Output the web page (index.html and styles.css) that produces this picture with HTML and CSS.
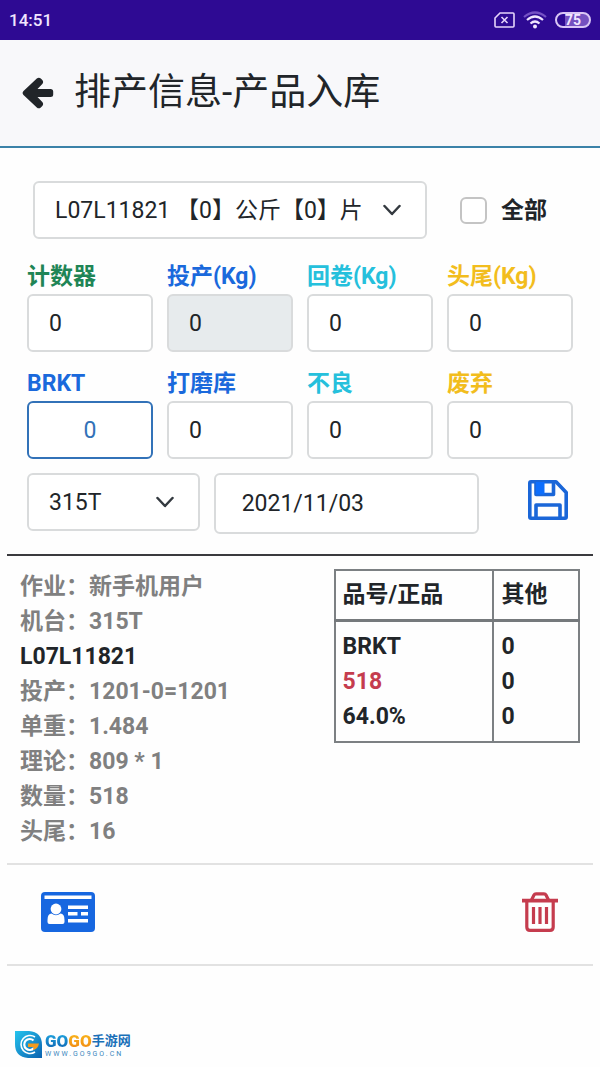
FILE: index.html
```html
<!DOCTYPE html>
<html lang="zh-CN">
<head>
  <meta charset="UTF-8" />
  <meta name="viewport" content="width=device-width, initial-scale=1" />
  <title>排产信息-产品入库</title>
  <link rel="stylesheet" href="styles.css">
</head>
<body>
  <div class="status-bar">
    <span>14:51</span>
    <div class="status-icons">
      <svg width="21" height="16" viewBox="0 0 21 16" fill="none" stroke="#e6d5fb" stroke-width="1.6">
        <path d="M6 1H19Q20 1 20 2V14Q20 15 19 15H2Q1 15 1 14V6Z" />
        <path d="M7.500 5L13.500 11M13.500 5L7.500 11" />
      </svg>
      <svg width="24" height="18" viewBox="0 0 24 18" fill="none" stroke="#f1e6ff" stroke-width="2.200">
        <path d="M1 6Q12 -3 23 6" stroke="#7551c4" />
        <path d="M4 9Q12 2 20 9" />
        <path d="M7.500 12.500Q12 8.500 16.500 12.500" />
        <circle cx="12" cy="15.500" r="2" fill="#f1e6ff" stroke="none" />
      </svg>
      <span class="battery">75</span>
    </div>
  </div>

  <header>
    <button type="button" class="back" aria-label="返回">
      <svg width="32" height="32" viewBox="0 0 32 32" fill="#212529">
        <path d="M18.800 1.500L20.300 3Q22 5 20.300 7L15.500 12H28.500Q31.200 12 31.200 14.500V17.500Q31.200 20 28.500 20H15.500L20.300 25Q22 27 20.300 29L18.800 30.500Q16.800 32.200 14.800 30.500L1.500 18Q-0.300 16 1.500 14L14.800 1.500Q16.800 -0.200 18.800 1.500Z" />
      </svg>
    </button>
    <h1>排产信息-产品入库</h1>
  </header>

  <main>
    <form>
      <div class="batch-row">
        <select class="control" aria-label="批次">
          <option>L07L11821 【0】公斤【0】片</option>
        </select>
        <label class="check"><input type="checkbox" name="all" />全部</label>
      </div>

      <div class="fields">
        <div class="field">
          <label for="counter" class="green">计数器</label>
          <input class="control" type="text" id="counter" value="0" />
        </div>
        <div class="field">
          <label for="input-kg" class="blue">投产(Kg)</label>
          <input class="control" type="text" id="input-kg" value="0" readonly />
        </div>
        <div class="field">
          <label for="rewind" class="cyan">回卷(Kg)</label>
          <input class="control" type="text" id="rewind" value="0" />
        </div>
        <div class="field">
          <label for="ends" class="yellow">头尾(Kg)</label>
          <input class="control" type="text" id="ends" value="0" />
        </div>
        <div class="field">
          <label for="brkt" class="blue">BRKT</label>
          <button class="control outline" type="button" id="brkt">0</button>
        </div>
        <div class="field">
          <label for="polish" class="blue">打磨库</label>
          <input class="control" type="text" id="polish" value="0" />
        </div>
        <div class="field">
          <label for="defect" class="cyan">不良</label>
          <input class="control" type="text" id="defect" value="0" />
        </div>
        <div class="field">
          <label for="scrap" class="yellow">废弃</label>
          <input class="control" type="text" id="scrap" value="0" />
        </div>
      </div>

      <div class="machine-row">
        <select class="control" aria-label="机台">
          <option>315T</option>
        </select>
        <input class="control date" type="text" value="2021/11/03" aria-label="日期" />
        <button type="submit" class="save" aria-label="保存">
          <svg width="40" height="40" viewBox="0 0 40 40" fill="none" stroke="#1a66d8" stroke-width="3.600" stroke-linejoin="round">
            <path d="M3 1.800H28L38.200 12.500V37Q38.200 38.200 37 38.200H3Q1.800 38.200 1.800 37V3Q1.800 1.800 3 1.800Z" />
            <path d="M8 2V14.500H25.500V2" />
            <path d="M8 2H16.500V14.500H8Z" fill="#0d6efd" stroke="none" />
            <path d="M8 38V25H32V38" />
          </svg>
        </button>
      </div>
    </form>

    <section class="record">
      <div class="info">
        <div>作业：新手机用户</div>
        <div>机台：315T</div>
        <div class="batch">L07L11821</div>
        <div>投产：1201-0=1201</div>
        <div>单重：1.484</div>
        <div>理论：809 * 1</div>
        <div>数量：518</div>
        <div>头尾：16</div>
      </div>
      <table>
        <thead>
          <tr><th>品号/正品</th><th>其他</th></tr>
        </thead>
        <tbody>
          <tr><td>BRKT</td><td>0</td></tr>
          <tr><td class="red">518</td><td>0</td></tr>
          <tr><td>64.0%</td><td>0</td></tr>
        </tbody>
      </table>
    </section>

    <div class="actions">
      <button type="button" aria-label="标签卡">
        <svg width="54" height="40" viewBox="0 0 54 40">
          <rect width="54" height="40" rx="4" fill="#1767e0" />
          <g fill="#fff">
            <rect x="3.500" y="3.500" width="47" height="3.500" />
            <circle cx="15" cy="17" r="5.400" />
            <path d="M6.500 30V28Q6.500 21.500 10.500 21.500Q15 25 19.500 21.500Q23.500 21.500 23.500 28V30Q23.500 32 21.500 32H8.500Q6.500 32 6.500 30Z" />
            <rect x="27" y="13.500" width="20" height="3.500" />
            <rect x="27" y="20" width="9.500" height="3.500" />
            <rect x="40" y="20" width="7" height="3.500" />
            <rect x="27" y="27" width="20" height="3.500" />
          </g>
        </svg>
      </button>
      <button type="button" aria-label="删除">
        <svg width="38" height="40" viewBox="0 0 38 40" fill="none" stroke="#c53c4e" stroke-width="3.200">
          <path d="M1 8.600H37" stroke-width="3.600" />
          <path d="M10.500 8L13 3Q13.600 1.800 15 1.800H23Q24.400 1.800 25 3L27.500 8" />
          <path d="M5.800 9V35Q5.800 38.400 9 38.400H29Q32.200 38.400 32.200 35V9" />
          <path d="M12.500 15V32M19 15V32M25.500 15V32" />
        </svg>
      </button>
    </div>
  </main>

  <footer>
    <svg width="27" height="27" viewBox="0 0 27 27" fill="none">
      <defs>
        <linearGradient id="leaf" x1="0" y1="0" x2="1" y2="1">
          <stop offset="0" stop-color="#25c4ee" />
          <stop offset="1" stop-color="#0b62b0" />
        </linearGradient>
      </defs>
      <path d="M0 0H14Q27 1 27 14V27H13Q0 26 0 13Z" fill="url(#leaf)" />
      <path d="M20 6A9 9 0 1 0 20 21" stroke="#fff" stroke-width="1.600" />
      <path d="M18.500 9.500A5.500 5.500 0 1 0 19 17" stroke="#fff" stroke-width="2.200" />
      <path d="M13 12.500H24Q23 18 18 19L18.500 16H13Z" fill="#f39a1e" />
    </svg>
    <div>
      <div class="brand"><span class="go">GO</span><span class="go orange">GO</span><span class="site">手游网</span></div>
      <div class="url">WWW.GO9GO.CN</div>
    </div>
  </footer>
</body>
</html>
```
FILE: styles.css
```css
* {
  box-sizing: border-box;
}

body {
  margin: 0;
  min-height: 100vh;
  display: flex;
  flex-direction: column;
  font-family: Roboto, "Noto Sans CJK SC", sans-serif;
  font-size: 23px;
  line-height: 35px;
  color: #212529;
  background: #fefefe;
}

button, input, select {
  font: inherit;
  color: inherit;
}

button {
  padding: 0;
  border: none;
  background: none;
  cursor: pointer;
}

svg {
  display: block;
}

.status-bar {
  display: flex;
  justify-content: space-between;
  align-items: center;
  height: 40px;
  padding: 0 9px;
  background: #2e0a93;
  color: #f1e6ff;
  font-size: 17px;
  font-weight: 500;
}

.status-icons {
  display: flex;
  align-items: center;
  gap: 8px;
}

.battery {
  width: 36px;
  height: 16px;
  border: 2px solid #d9c6f5;
  border-radius: 8px;
  background: linear-gradient(90deg, #2e0a93 25%, #7450c0 25%);
  font-size: 14px;
  font-weight: 700;
  line-height: 12px;
  text-align: center;
}

header {
  display: flex;
  align-items: center;
  gap: 20px;
  height: 108px;
  padding: 0 22px;
  background: #f8f8fa;
  border-bottom: 2px solid #3b82a8;
}

h1 {
  margin: 0;
  font-size: 37px;
  font-weight: 400;
  line-height: 44px;
}

main {
  padding: 33px 7px 0;
}

form {
  padding: 0 20px 20px;
  border-bottom: 2px solid #3a3a3e;
}

.control {
  width: 100%;
  min-width: 0;
  height: 58px;
  padding: 0 20px;
  border: 2px solid #d9dbdc;
  border-radius: 6px;
  background: #fff;
}

select.control {
  appearance: none;
  background: #fff url("data:image/svg+xml,%3Csvg xmlns='http://www.w3.org/2000/svg' width='18' height='12' viewBox='0 0 18 12'%3E%3Cpath d='M1.500 2l7.500 8 7.500-8' fill='none' stroke='%23343a40' stroke-width='2.500' stroke-linecap='round' stroke-linejoin='round'/%3E%3C/svg%3E") no-repeat right 24px center;
}

.control[readonly] {
  background: #e7ebed;
}

.control.outline {
  border-color: #3272b8;
  color: #3272b8;
}

.batch-row {
  display: flex;
  align-items: center;
  gap: 33px;
  padding: 0 26px 0 6px;
}

.check {
  display: flex;
  flex-shrink: 0;
  align-items: center;
  gap: 14px;
  font-weight: 700;
}

.check input {
  appearance: none;
  width: 27px;
  height: 27px;
  margin: 0;
  border: 2px solid #c4c4c4;
  border-radius: 6px;
  background: #fff;
}

.fields {
  display: grid;
  grid-template-columns: repeat(4, 1fr);
  gap: 14px;
  margin: 20px 0 14px;
}

.field label {
  display: block;
  font-weight: 700;
}

.field .control {
  display: block;
}

.green {
  color: #1f8556;
}

.blue {
  color: #1a69dc;
}

.cyan {
  color: #25c0dc;
}

.yellow {
  color: #f2bd1d;
}

.red {
  color: #c53c4e;
}

.machine-row {
  display: grid;
  grid-template-columns: 13fr 20fr 6fr;
  gap: 14px;
}

.control.date {
  height: 61px;
  padding: 0 26px;
}

.save {
  display: flex;
  justify-content: flex-end;
  align-items: center;
  padding: 0 5px 7px 0;
}

.record {
  display: flex;
  justify-content: space-between;
  align-items: flex-start;
  padding: 13px 13px 14px;
  border-bottom: 2px solid #e2e2e2;
  font-weight: 700;
}

.info {
  color: #808080;
}

.info .batch {
  color: #212529;
}

table {
  width: 44%;
  border-collapse: collapse;
  border: 2px solid #7c8083;
}

th, td {
  padding: 0 7px;
  border-left: 2px solid #7c8083;
  text-align: left;
}

th {
  padding: 6px 7px 7px;
  border-bottom: 3px solid #75797c;
}

th:first-child {
  width: 65%;
}

tbody tr:first-child td {
  padding-top: 7px;
}

tbody tr:last-child td {
  padding-bottom: 7px;
}

.actions {
  display: flex;
  justify-content: space-between;
  padding: 27px 34px 32px;
  border-bottom: 2px solid #e2e2e2;
}

footer {
  display: flex;
  align-items: center;
  gap: 3px;
  margin-top: auto;
  padding: 0 15px 9px;
}

.brand {
  display: flex;
  align-items: center;
  height: 20px;
  line-height: 20px;
}

.go {
  font-size: 17px;
  font-weight: 900;
  background: linear-gradient(#22aee6, #0d5fae);
  background-clip: text;
  color: transparent;
}

.go.orange {
  background-image: linear-gradient(#fbbd1c, #f08312);
}

.site {
  font-size: 13px;
  font-weight: 700;
  color: #1a70b8;
}

.url {
  font-size: 7px;
  line-height: 7px;
  letter-spacing: 2px;
  color: #3a86bd;
}
```
